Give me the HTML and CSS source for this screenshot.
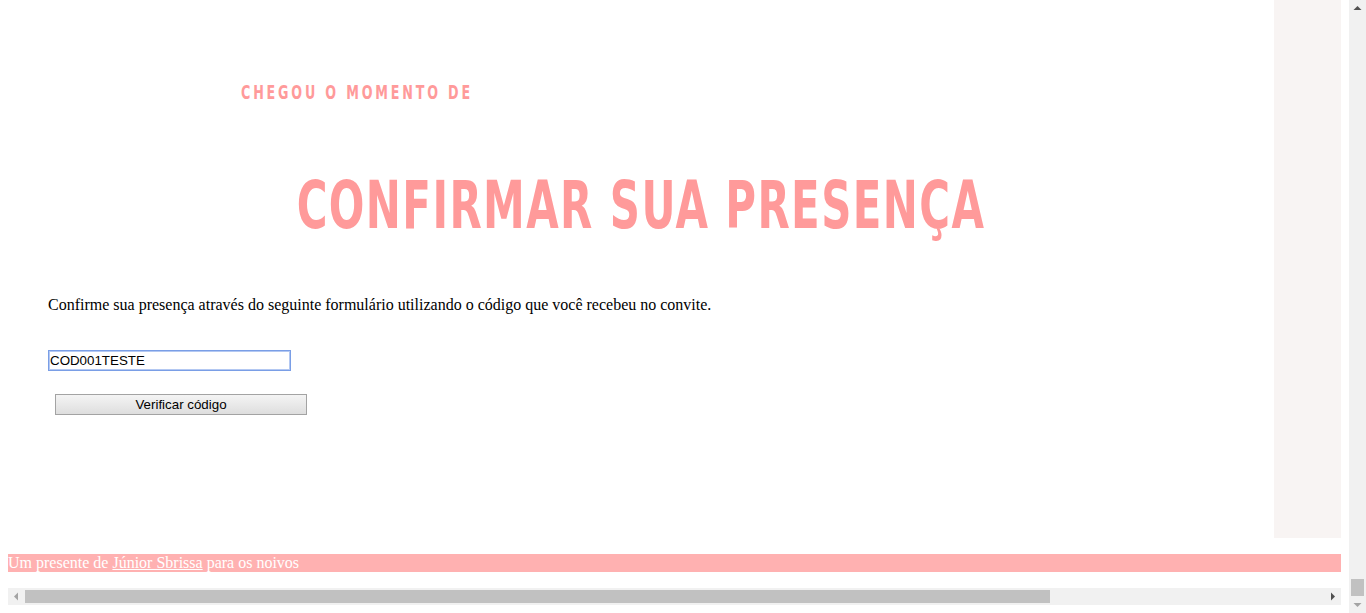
FILE: index.html
```html
<!DOCTYPE html>
<html lang="pt-BR">
<head>
<meta charset="utf-8">
<title>Confirmar presença</title>
<link rel="stylesheet" href="styles.css">
</head>
<body>
<div class="screen">
  <div class="page">
    <div class="wrap">
      <div class="row">
        <main class="main">
          <section class="rsvp">
            <h3 class="kicker">Chegou o momento de</h3>
            <h1 class="title">Confirmar sua presença</h1>
            <p class="lead">Confirme sua presença através do seguinte formulário utilizando o código que você recebeu no convite.</p>
            <form class="form">
              <input class="code" type="text" value="COD001TESTE">
              <button class="verify" type="button">Verificar código</button>
            </form>
          </section>
        </main>
        <aside class="side"></aside>
      </div>
      <p class="footer">Um presente de <a href="#">Júnior Sbrissa</a> para os noivos</p>
    </div>
    <div class="hbar">
      <span class="sb-btn">
        <svg width="17" height="17" viewBox="0 0 17 17"><polygon points="6,8.5 10,4.5 10,12.5" fill="#a3a3a3"/></svg>
      </span>
      <span class="htrack"><span class="hthumb" style="width:1025px"></span></span>
      <span class="sb-btn">
        <svg width="17" height="17" viewBox="0 0 17 17"><polygon points="11,8.5 7,4.5 7,12.5" fill="#505050"/></svg>
      </span>
    </div>
  </div>
  <div class="vbar">
    <span class="sb-btn">
      <svg width="17" height="17" viewBox="0 0 17 17"><polygon points="8.5,6 4.5,10 12.5,10" fill="#505050"/></svg>
    </span>
    <span class="vtrack"><span class="vthumb" style="height:17px"></span></span>
    <span class="sb-btn">
      <svg width="17" height="17" viewBox="0 0 17 17"><polygon points="8.5,11 4.5,7 12.5,7" fill="#a3a3a3"/></svg>
    </span>
  </div>
</div>
</body>
</html>
```

FILE: styles.css
```css
html, body {
  margin: 0;
  padding: 0;
  background: #fff;
}
body {
  font-family: "Liberation Serif", "Times New Roman", serif;
  font-size: 16px;
  color: #000;
}
.screen {
  display: flex;
  height: 613px;
  overflow: hidden;
}
.page {
  flex: 1;
  min-width: 0;
  padding: 0 8px 8px;
  display: flex;
  flex-direction: column;
}
.wrap {
  overflow: hidden;
}
.row {
  display: flex;
  height: 538px;
}
.main {
  flex: 1;
  min-width: 0;
}
.side {
  width: 67px;
  background: #f8f4f3;
}
.rsvp {
  padding-top: 80px;
}
.kicker {
  margin: 0 0 0 233px;
  font-family: "DejaVu Sans Condensed", "DejaVu Sans", sans-serif;
  font-weight: bold;
  font-size: 20px;
  letter-spacing: 4px;
  text-transform: uppercase;
  color: #ff9a9a;
  transform: scaleX(0.706);
  transform-origin: left center;
}
.title {
  margin: 63px 0 0;
  text-align: center;
  font-family: "DejaVu Sans Condensed", "DejaVu Sans", sans-serif;
  font-weight: bold;
  font-size: 66px;
  letter-spacing: 2px;
  text-transform: uppercase;
  color: #ff9a9a;
  transform: scaleX(0.706);
  transform-origin: center center;
}
.lead {
  margin: 52px 0 0 40px;
}
.form {
  margin-left: 40px;
  display: flex;
  flex-direction: column;
  align-items: flex-start;
}
.code {
  margin: 36px 0 0;
  width: 243px;
  height: 21px;
  box-sizing: border-box;
  border: 1px solid #7a9ee6;
  box-shadow: 0 0 0 1px #b3c8f2 inset;
  padding: 1px 1px;
  font-family: "Liberation Sans", Arial, sans-serif;
  font-size: 13.33px;
  color: #000;
  outline: none;
}
.verify {
  margin: 23px 0 0 7px;
  width: 252px;
  height: 21px;
  border: 1px solid #a3a3a3;
  background: linear-gradient(#f4f4f4, #dedede);
  font-family: "Liberation Sans", Arial, sans-serif;
  font-size: 13.33px;
  color: #000;
  padding: 0;
}
.footer {
  margin: 16px 0;
  height: 18px;
  line-height: 18px;
  background: #ffb1b1;
  color: #fff;
}
.footer a {
  color: #fff;
}
.sb-btn {
  display: block;
  width: 17px;
  height: 17px;
  flex: none;
}
.sb-btn svg {
  display: block;
}
.hbar {
  display: flex;
  height: 17px;
  background: #f1f1f1;
}
.htrack {
  flex: 1;
  display: flex;
  align-items: center;
}
.hthumb {
  display: block;
  height: 13px;
  background: #c1c1c1;
}
.vbar {
  width: 17px;
  flex: none;
  display: flex;
  flex-direction: column;
  background: #f1f1f1;
}
.vtrack {
  flex: 1;
  display: flex;
  flex-direction: column;
  justify-content: flex-end;
  align-items: center;
}
.vthumb {
  display: block;
  width: 13px;
  background: #c1c1c1;
}
```
